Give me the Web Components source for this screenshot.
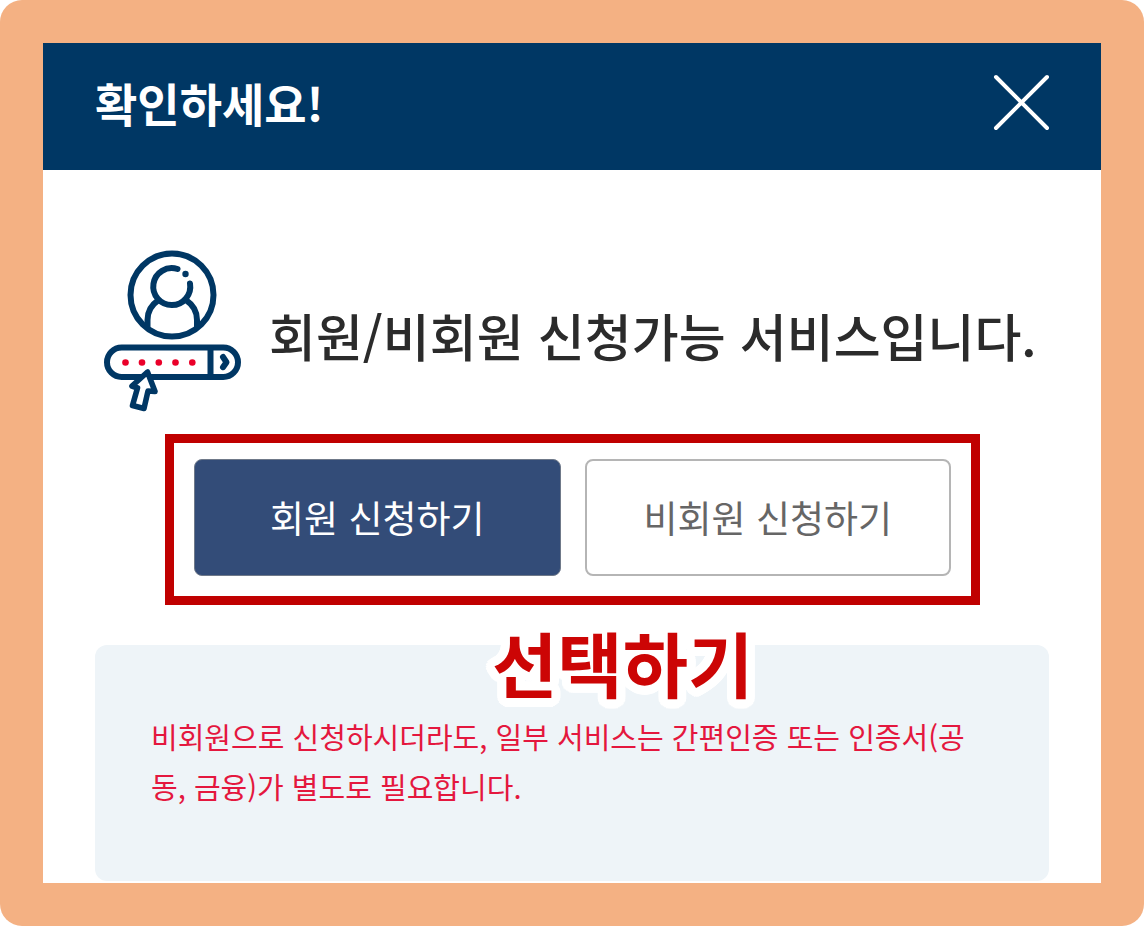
<!DOCTYPE html>
<html lang="ko">
<head>
<meta charset="utf-8">
<meta name="viewport" content="width=device-width, initial-scale=1">
<title>확인하세요!</title>
<style>
  body { margin: 0; background: #fff; font-family: "Noto Sans CJK KR", sans-serif; color: #2b2b2b; }
</style>
</head>
<body>
<service-dialog>
  <dialog-header slot="header">확인하세요!</dialog-header>
  <service-heading>회원/비회원 신청가능 서비스입니다.</service-heading>
  <choice-group>
    <choice-button variant="primary">회원 신청하기</choice-button>
    <choice-button>비회원 신청하기</choice-button>
    <span slot="callout">선택하기</span>
  </choice-group>
  <notice-box>비회원으로 신청하시더라도, 일부 서비스는 간편인증 또는 인증서(공동, 금융)가 별도로 필요합니다.</notice-box>
</service-dialog>

<script>
  const define = (name, html) => customElements.define(name, class extends HTMLElement {
    constructor() {
      super();
      this.attachShadow({ mode: "open" }).innerHTML = html;
    }
  });

  // A ring of hard shadows gives the callout text a round-cornered outline.
  const outline = (radius, color) => [radius, radius / 2].flatMap(r =>
    Array.from({ length: 32 }, (_, i) => {
      const a = i * Math.PI / 16;
      return `${(r * Math.cos(a)).toFixed(2)}px ${(r * Math.sin(a)).toFixed(2)}px 0 ${color}`;
    })).join(", ");

  define("service-dialog", `
    <style>
      :host { display: flex; box-sizing: border-box; min-height: 100vh; padding: 43px; border-radius: 22px; background: #f4b183; }
      section { flex: 1; min-width: 0; background: #fff; }
      main { padding: 80px 52px 2px; }
    </style>
    <section role="dialog" aria-label="확인하세요!">
      <slot name="header"></slot>
      <main><slot></slot></main>
    </section>`);

  define("dialog-header", `
    <style>
      :host { display: block; background: #003764; color: #fff; }
      header { display: flex; align-items: center; justify-content: space-between; height: 127px; padding: 0 50px 10px 52px; box-sizing: border-box; }
      h1 { margin: 0; font-size: 46px; line-height: 60px; font-weight: 700; }
      button { display: block; padding: 0; border: 0; background: none; color: inherit; cursor: pointer; }
      svg { display: block; }
    </style>
    <header>
      <h1><slot></slot></h1>
      <button type="button" aria-label="닫기">
        <svg width="60" height="60" viewBox="0 0 60 60" fill="none" stroke="currentColor" stroke-width="4" stroke-linecap="round"><path d="M5 5 56 56M56 5 5 56"/></svg>
      </button>
    </header>`);

  define("service-heading", `
    <style>
      :host { display: flex; align-items: center; gap: 27px; padding-left: 9px; }
      svg { flex: none; }
      h2 { margin: 0; padding-top: 8px; font-size: 51px; line-height: 72px; font-weight: 500; }
    </style>
    <svg width="138" height="162" viewBox="14 10 138 162" fill="none" stroke="#003764" stroke-width="6" stroke-linecap="round" stroke-linejoin="round" aria-hidden="true">
      <circle cx="82" cy="55" r="41.5"/>
      <path d="M87.500 29A18.500 18.500 0 1 0 100 43.500"/>
      <path d="M68 60.500C60.500 65.500 57.500 72 57.500 80v7M96.500 60.500C104 65.500 107 72 107 80v7"/>
      <circle cx="95.500" cy="34" r="3.200" fill="#003764" stroke="none"/>
      <rect x="17" y="107.500" width="131" height="29.500" rx="14.700"/>
      <path d="M120.500 108v28.500M133 117l3.500 5.200-3.500 5"/>
      <g fill="#ea0029" stroke="none"><circle cx="35.500" cy="122.500" r="3.300"/><circle cx="52" cy="122.500" r="3.300"/><circle cx="68.800" cy="122.500" r="3.300"/><circle cx="85.500" cy="122.500" r="3.300"/><circle cx="102.300" cy="122.500" r="3.300"/></g>
      <path d="M57.500 132 42 146l5.500 2L42.500 165.500l11.500 3 4-17.500 7 .5z" fill="#fff" stroke-width="5.600"/>
    </svg>
    <h2><slot></slot></h2>`);

  define("choice-group", `
    <style>
      :host { display: block; position: relative; margin: 22px 69px 40px 70px; border: 9px solid #c00000; padding: 16px 20px 20px; }
      div { display: grid; grid-template-columns: 1fr 1fr; gap: 24px; }
      p { position: absolute; z-index: 1; left: 318px; top: 168px; margin: 0; font-size: 71px; line-height: 100px; font-weight: 700; white-space: nowrap; color: #cc0505; text-shadow: ${outline(9, "#fff")}; pointer-events: none; }
    </style>
    <div><slot></slot></div>
    <p><slot name="callout"></slot></p>`);

  define("choice-button", `
    <style>
      :host { display: block; }
      button { display: block; width: 100%; height: 117px; box-sizing: border-box; padding: 0 0 2px; border: 2px solid #b5b5b5; border-radius: 8px; background: #fff; color: #666; font: 400 37px/54px "Noto Sans CJK KR", sans-serif; cursor: pointer; }
      :host([variant="primary"]) button { border: 1px solid #6f7989; background: #334c78; color: #fff; }
    </style>
    <button type="button"><slot></slot></button>`);

  define("notice-box", `
    <style>
      :host { display: block; padding: 66px 56px 70px; border-radius: 12px; background: #eef4f8; color: #e4173e; }
      p { margin: 0; font-size: 29px; line-height: 50px; word-break: break-all; }
    </style>
    <p><slot></slot></p>`);
</script>
</body>
</html>
